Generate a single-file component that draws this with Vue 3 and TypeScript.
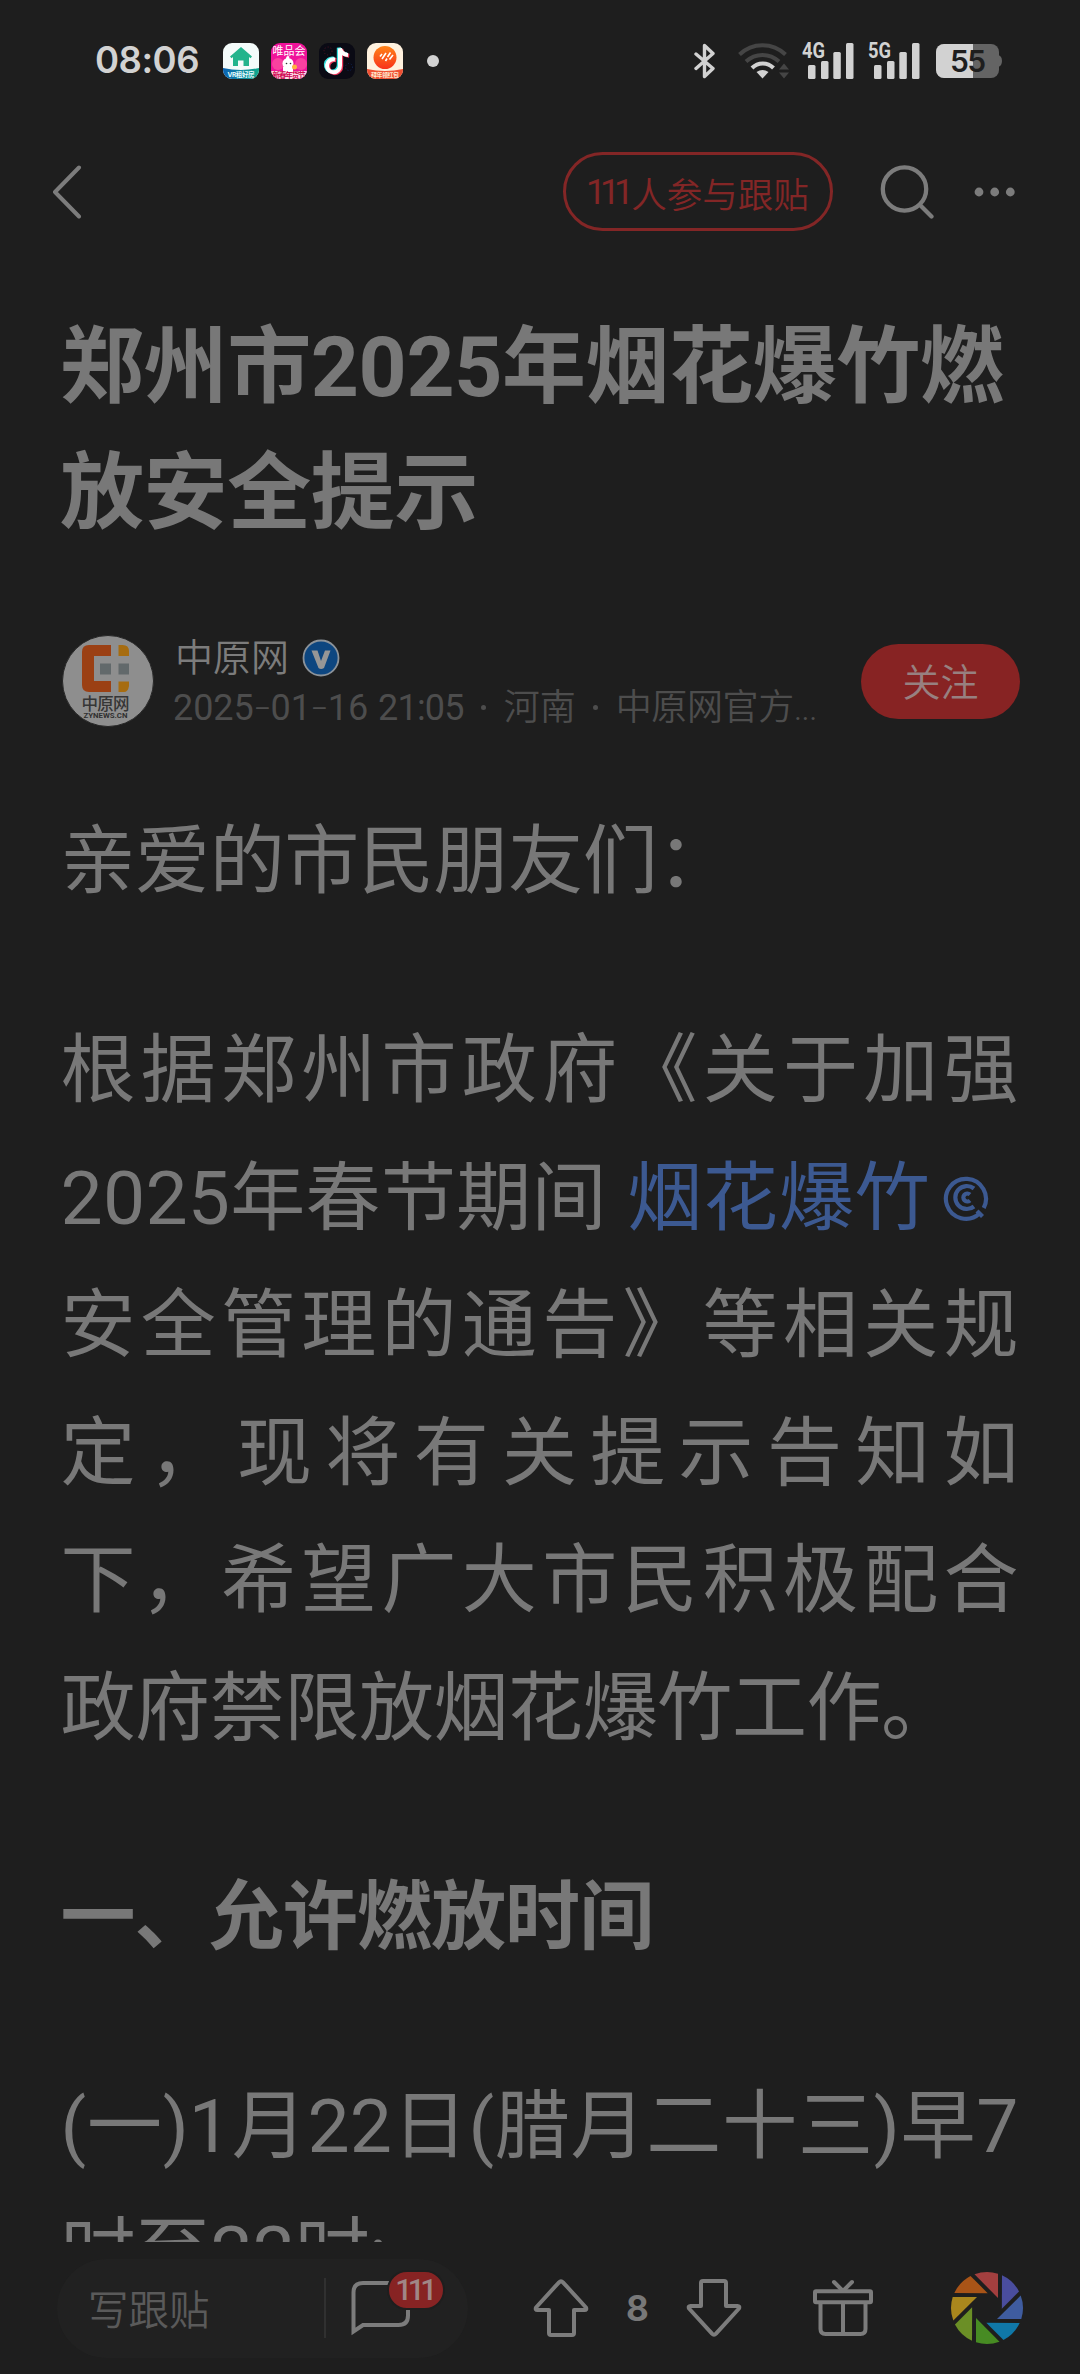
<script setup lang="ts">
interface Line { text: string; justify: boolean }

const before: Line[] = [{ text: '根据郑州市政府《关于加强', justify: true }]
const after: Line[] = [
  { text: '安全管理的通告》等相关规', justify: true },
  { text: '定，现将有关提示告知如', justify: true },
  { text: '下，希望广大市民积极配合', justify: true },
  { text: '政府禁限放烟花爆竹工作。', justify: false },
]
const signals = ['4G', '5G']
const blades = ['#a33f3f', '#4a4d9e', '#3f5c9f', '#1078a8', '#478b23', '#6b8f26', '#aa871d', '#a95417']
</script>

<template>
  <div class="screen">
    <header class="status">
      <span class="clock">08:06</span>
      <div class="apps">
        <svg width="36" height="36" viewBox="0 0 36 36">
          <defs>
            <clipPath id="r1"><rect width="36" height="36" rx="9" /></clipPath>
            <linearGradient id="g1"><stop offset="0" stop-color="#0c63b4" /><stop offset="1" stop-color="#12a98c" /></linearGradient>
          </defs>
          <g clip-path="url(#r1)">
            <rect width="36" height="36" fill="#f4fbfa" />
            <path d="M0 25Q18 29 36 25V36H0Z" fill="url(#g1)" />
            <path d="M18 4 7 13.5l1.5 1.7L10 14v9h5v-5.500h5.500V23H26v-9l1.500 1.200L29 13.500Z" fill="#22b48c" />
            <text x="18" y="34" text-anchor="middle" font-size="6.500" font-weight="700" fill="#e5fbff" textLength="27">VR租好房</text>
          </g>
        </svg>
        <svg width="36" height="36" viewBox="0 0 36 36">
          <defs><clipPath id="r2"><rect width="36" height="36" rx="9" /></clipPath></defs>
          <g clip-path="url(#r2)">
            <rect width="36" height="36" fill="#f0139a" />
            <circle cx="7" cy="21" r="6" fill="#f9419f" /><circle cx="30" cy="21" r="6" fill="#f9419f" />
            <rect y="28" width="36" height="8" fill="#fbd9e8" />
            <circle cx="17" cy="20.500" r="5.500" fill="#fff" /><path d="M15 16q0-3 2-3t1 3M12 24h10v5H12z" fill="#fff" />
            <circle cx="23.500" cy="24" r="2.500" fill="#ffb23e" /><circle cx="15.500" cy="20.500" r=".8" fill="#333" /><circle cx="19.500" cy="20.500" r=".8" fill="#333" />
            <text x="18" y="12" text-anchor="middle" font-size="11" fill="#fff" textLength="33">唯品会</text>
            <text x="18" y="34.500" text-anchor="middle" font-size="7.500" font-weight="700" fill="#d10a55" textLength="33">新春年货节</text>
          </g>
        </svg>
        <svg width="36" height="36" viewBox="0 0 36 36">
          <rect width="36" height="36" rx="9" fill="#0a0a14" />
          <circle cx="9" cy="8" r="4" fill="none" stroke="#571424" stroke-dasharray="1 2" />
          <circle cx="30" cy="24" r="3.500" fill="none" stroke="#10285e" stroke-dasharray="1 2" />
          <g fill="none" stroke-width="4">
            <path d="M16 16.500a6.500 6.500 0 1 0 5 6V5.500q1.500 6 8 6.500" stroke="#38e2e0" transform="translate(-1.200 -.8)" />
            <path d="M16 16.500a6.500 6.500 0 1 0 5 6V5.500q1.500 6 8 6.500" stroke="#f0385c" transform="translate(1.200 .8)" />
            <path d="M16 16.500a6.500 6.500 0 1 0 5 6V5.500q1.500 6 8 6.500" stroke="#fff" />
          </g>
        </svg>
        <svg width="36" height="36" viewBox="0 0 36 36">
          <defs>
            <clipPath id="r4"><rect width="36" height="36" rx="9" /></clipPath>
            <linearGradient id="g4" x2="0" y2="1"><stop offset="0" stop-color="#ff8418" /><stop offset="1" stop-color="#f8321c" /></linearGradient>
          </defs>
          <g clip-path="url(#r4)">
            <rect width="36" height="36" fill="#fff2df" />
            <path d="M0 26Q18 30 36 26V36H0Z" fill="#ef5033" />
            <circle cx="18" cy="14.500" r="11.500" fill="url(#g4)" />
            <path d="M13 13.500 15 11M15 16l4-6M18.500 18 20 15.500M20.500 14l3-4.500M22.500 16.500 26 12" stroke="#fff" stroke-width="1.600" fill="none" />
            <text x="18" y="34" text-anchor="middle" font-size="6" font-weight="700" fill="#ffe7cf" textLength="28">拜年领红包</text>
          </g>
        </svg>
      </div>
      <i class="more-dot"></i>
      <div class="indicators">
        <svg class="bt" width="22" height="36" viewBox="0 0 22 36"><path d="M2 11 19 25.500 10.500 33.500V2.500L19 10.500 2 25.500" fill="none" stroke="#d2d2d2" stroke-width="3.400" stroke-linejoin="round" stroke-linecap="round" /></svg>
        <svg class="wifi" width="52" height="36" viewBox="0 0 52 36">
          <g fill="none" stroke-width="4">
            <path d="M1.500 11.500a33 33 0 0 1 46 0" stroke="#454545" /><path d="M8 18.500a24 24 0 0 1 33 0" stroke="#454545" />
            <path d="M14 25a15 15 0 0 1 21.500 0" stroke="#d2d2d2" />
          </g>
          <path d="M18.500 29q6-4 12 0l-6 6.500Z" fill="#d2d2d2" />
          <path d="M41 26.500 46 20.500 51 26.500ZM41 29.500 46 35.500 51 29.500Z" fill="#454545" />
        </svg>
        <svg v-for="s in signals" :key="s" class="signal" width="53" height="46" viewBox="0 -4 53 46">
          <g fill="#d2d2d2">
            <text x="0" y="16" font-size="22" font-weight="700" textLength="23" lengthAdjust="spacingAndGlyphs">{{ s }}</text>
            <rect x="6" y="23" width="7.500" height="14" rx="1.500" /><rect x="19" y="19" width="7.500" height="18" rx="1.500" />
            <rect x="31.300" y="10" width="7.500" height="27" rx="1.500" /><rect x="44" y="1" width="7.500" height="36" rx="1.500" />
          </g>
        </svg>
        <svg class="battery" width="67" height="36" viewBox="0 0 67 36">
          <defs><clipPath id="bat"><rect y="1" width="63" height="34" rx="8" /></clipPath></defs>
          <path d="M62 12q4 1 4 6t-4 6Z" fill="#646464" />
          <g clip-path="url(#bat)"><rect width="63" height="36" fill="#646464" /><rect width="37" height="36" fill="#d2d2d2" /></g>
          <text x="32" y="29" text-anchor="middle" font-size="30" font-weight="600" fill="#1e1e1e" textLength="36">55</text>
        </svg>
      </div>
    </header>

    <nav class="nav">
      <svg class="back" width="30" height="54" viewBox="0 0 30 54"><path d="M27 2.500 3 27 27 51.500" fill="none" stroke="#7c7c7c" stroke-width="4" stroke-linecap="round" stroke-linejoin="round" /></svg>
      <div class="join"><span class="ones">111</span>人参与跟贴</div>
      <svg class="search" width="54" height="56" viewBox="0 0 54 56"><g fill="none" stroke="#7c7c7c" stroke-width="4.300"><circle cx="24.500" cy="25" r="21.700" /><path d="M40.500 41.500 51.500 52.500" stroke-linecap="round" /></g></svg>
      <svg class="dots" width="42" height="12" viewBox="0 0 42 12"><g fill="#7c7c7c"><circle cx="5" cy="6" r="4.400" /><circle cx="20.700" cy="6" r="4.400" /><circle cx="36.300" cy="6" r="4.400" /></g></svg>
    </nav>

    <main class="article">
      <h1 class="title">郑州市2025年烟花爆竹燃<br>放安全提示</h1>

      <section class="author">
        <svg class="avatar" width="92" height="92" viewBox="0 0 92 92">
          <circle cx="46" cy="46" r="45.500" fill="#8e8e8e" stroke="#262626" />
          <path d="M49 10H27q-7 0-7 7v33q0 7 7 7h22V46H32V21h17Z" fill="#9b4014" />
          <path d="M56.500 10h4q6.500 0 6.500 6v5H56.500ZM56.500 46.500H67V51q-1 6-5 6h-5.500Z" fill="#a66c10" />
          <path d="M38 28.500h11v11H38ZM56.500 28.500h10.500v11H56.500Z" fill="#62696b" />
          <text x="43.500" y="75" text-anchor="middle" font-size="16.500" font-weight="500" fill="#363636" textLength="48">中原网</text>
          <text x="43.500" y="82.500" text-anchor="middle" font-size="6.500" font-weight="700" fill="#303030" textLength="44" lengthAdjust="spacingAndGlyphs">ZYNEWS.CN</text>
        </svg>
        <div class="info">
          <div class="name">中原网
            <svg width="38" height="38" viewBox="0 0 38 38"><circle cx="19" cy="19" r="17.500" fill="#0d4680" stroke="#8b9299" stroke-width="1.800" /><path d="M9.500 11.500h6L19 22l4-10.500h5.500L22 29q-3 2-5.500 0Z" fill="#969696" /></svg>
          </div>
          <div class="meta"><span class="date">2025<b>-</b>01<b>-</b>16</span><span class="time">21:05</span><i></i><span>河南</span><i></i><span class="source">中原网官方</span><span class="dotdot">...</span></div>
        </div>
        <button class="follow">关注</button>
      </section>

      <div class="body">
        <p><span class="line loose">亲爱的市民朋友们：</span></p>
        <p>
          <span v-for="l in before" :key="l.text" class="line" :class="{ full: l.justify }">{{ l.text }}</span>
          <span class="line mixed"><span>2025年春节期间</span><a>烟花爆竹</a><svg width="46" height="46" viewBox="0 0 46 46"><g fill="none" stroke="#3c5991" stroke-width="4.200"><path d="M36.500 38.500A20 20 0 1 1 40.700 33" /><path d="M34 36 39.500 41.500" /><path d="M31 13.500a11.500 11.500 0 1 0 0 18" /><path d="M27 19.500a4 4 0 1 0 0 6" /></g></svg></span>
          <span v-for="l in after" :key="l.text" class="line" :class="l.justify ? 'full' : 'loose'">{{ l.text }}</span>
        </p>
        <p><strong class="line">一、允许燃放时间</strong></p>
        <p><span class="line full">(一)1月22日(腊月二十三)早7</span><span class="line">时至22时;</span></p>
      </div>
    </main>

    <footer class="bar">
      <div class="comment">
        <span class="hint">写跟贴</span>
        <i class="rule"></i>
        <div class="bubble">
          <svg width="60" height="58" viewBox="0 0 60 58"><path d="M2.500 52.500V13.500Q2.500 4 12 4H47.500Q57 4 57 13.500V36.500Q57 46 47.500 46H12Z" fill="none" stroke="#7c7c7c" stroke-width="4" /></svg>
          <span class="count"><span>111</span></span>
        </div>
      </div>
      <svg class="up" width="56" height="60" viewBox="0 0 56 60"><path d="M26 4.300q2-2 4 0L53 29.500q1 2.500-1.500 2.500H41v23q0 2-2 2H18q-2 0-2-2V32H4.500Q2 32 3 29.500Z" fill="none" stroke="#7c7c7c" stroke-width="4" stroke-linejoin="round" /></svg>
      <span class="votes">8</span>
      <svg class="down" width="56" height="60" viewBox="0 0 56 60"><path d="M26 4.300q2-2 4 0L53 29.500q1 2.500-1.500 2.500H41v23q0 2-2 2H18q-2 0-2-2V32H4.500Q2 32 3 29.500Z" fill="none" stroke="#7c7c7c" stroke-width="4" stroke-linejoin="round" transform="rotate(180 28 30)" /></svg>
      <svg class="gift" width="62" height="60" viewBox="0 0 62 60"><g fill="none" stroke="#7c7c7c" stroke-width="4" stroke-linecap="round" stroke-linejoin="round"><rect x="3" y="13.300" width="56" height="11" rx="1" /><path d="M8.500 25v26q0 5 5 5h35q5 0 5-5V25M31 25v31M22 4l9 9 9-9" /></g></svg>
      <svg class="wheel" width="74" height="74" viewBox="-37 -37 74 74"><path v-for="(c, i) in blades" :key="c" :fill="c" :transform="`rotate(${i * 45})`" d="M-12.500-33.700A36 36 0 0 1 11-34.300V-10Z" /></svg>
    </footer>
  </div>
</template>

<style>
html, body { background: #1e1e1e; }
body { overflow: hidden; }
</style>

<style scoped>
* { box-sizing: border-box; }
.screen { width: 1080px; height: 2374px; overflow: hidden; display: flex; flex-direction: column; background: #1e1e1e; color: #787878; font-family: Roboto, "Noto Sans CJK SC", sans-serif; }
svg { display: block; flex: none; }
i { display: block; flex: none; }
.status { flex: none; height: 122px; display: flex; align-items: center; padding-left: 95px; font-family: Inter, "Noto Sans CJK SC", sans-serif; }
.clock { width: 128px; font-size: 36.500px; font-weight: 600; color: #d2d2d2; letter-spacing: -.5px; line-height: 40px; padding-bottom: 3px; }
.apps { display: flex; gap: 12px; }
.more-dot { width: 12px; height: 12px; border-radius: 50%; background: #d2d2d2; margin-left: 24px; }
.indicators { display: flex; align-items: center; margin-left: 255px; }
.wifi { margin-left: 22px; }
.signal { margin-left: 13px; font-family: Roboto, sans-serif; }
.wifi + .signal { margin-left: 12px; }
.battery { margin-left: 15px; }
.nav { flex: none; height: 140px; display: flex; align-items: center; padding: 0 0 1px 52px; }
.join { width: 270px; height: 79px; margin-left: 481px; border: 3px solid #832626; border-radius: 40px; display: flex; align-items: center; color: #832626; font-size: 35.500px; font-weight: 350; padding: 1px 0 0 20px; }
.ones { letter-spacing: -5.900px; padding-right: 3px; font-weight: 400; }
.search { margin-left: 47px; }
.dots { margin-left: 40px; }
.article { flex: none; height: 1980px; overflow: hidden; padding: 43px 60px 0 62px; }
.title { margin: 0 0 0 -2px; width: 970px; font-size: 84px; line-height: 126px; font-weight: 700; letter-spacing: -.4px; white-space: nowrap; }
.author { display: flex; align-items: center; height: 92px; margin-top: 78px; }
.info { width: 660px; margin-left: 21px; font-weight: 350; white-space: nowrap; padding-top: 5px; }
.name { display: flex; align-items: center; gap: 13px; font-size: 38px; line-height: 48px; color: #7c7c7c; }
.meta { display: flex; align-items: center; height: 52px; font-size: 36px; line-height: 50px; color: #4d4d4d; }
.date { margin-left: -2px; font-weight: 400; letter-spacing: -.1px; }
.date b { display: inline-block; width: 17px; font-weight: 350; transform: scaleX(1.500); text-align: center; }
.time { margin-left: 10px; font-weight: 400; letter-spacing: -.8px; }
.meta i { width: 5px; height: 5px; border-radius: 50%; background: #4d4d4d; margin: 0 18px 0 17px; }
.source { letter-spacing: -.4px; }
.dotdot { letter-spacing: -1px; }
.follow { width: 159px; height: 75px; margin-left: 26px; padding: 0 0 3px; border: 0; border-radius: 38px; background: #872323; color: #978080; font: 350 38px "Noto Sans CJK SC", sans-serif; }
.body { width: 958px; margin: 71px 0 0 -1.500px; font-size: 75px; }
.body p { margin: 0 0 81.500px; }
.line { display: block; height: 127.500px; line-height: 127.500px; white-space: nowrap; }
.full { text-align: justify; text-align-last: justify; white-space: normal; }
.loose { letter-spacing: -.4px; }
strong.line { letter-spacing: -.9px; }
.mixed { display: flex; align-items: center; letter-spacing: .3px; }
.mixed a { color: #3c5991; margin-left: 20.500px; letter-spacing: .8px; }
.mixed svg { margin-left: 12px; }
.bar { flex: none; height: 132px; padding: 0 0 0 57px; display: flex; align-items: center; background: #1e1e1e; }
.comment { width: 411px; height: 99px; border-radius: 50px; background: #212121; display: flex; align-items: center; padding-left: 31px; }
.hint { width: 236px; font-size: 40.500px; font-weight: 350; color: #5a5a5a; padding-bottom: 2px; }
.rule { width: 2px; height: 60px; background: #303030; }
.bubble { position: relative; margin-left: 25px; }
.count { position: absolute; left: 36px; top: -9px; width: 58px; height: 40px; border: 2px solid #1e1e1e; border-radius: 20px; background: #872323; color: #a08686; font-size: 30px; font-weight: 500; line-height: 36px; text-align: center; }
.count span { letter-spacing: -4.500px; margin-left: -4px; }
.up { margin-left: 65px; }
.votes { width: 97px; text-align: center; font: 700 35px Inter, sans-serif; }
.gift { margin-left: 70px; }
.wheel { margin-left: 76px; }
</style>
